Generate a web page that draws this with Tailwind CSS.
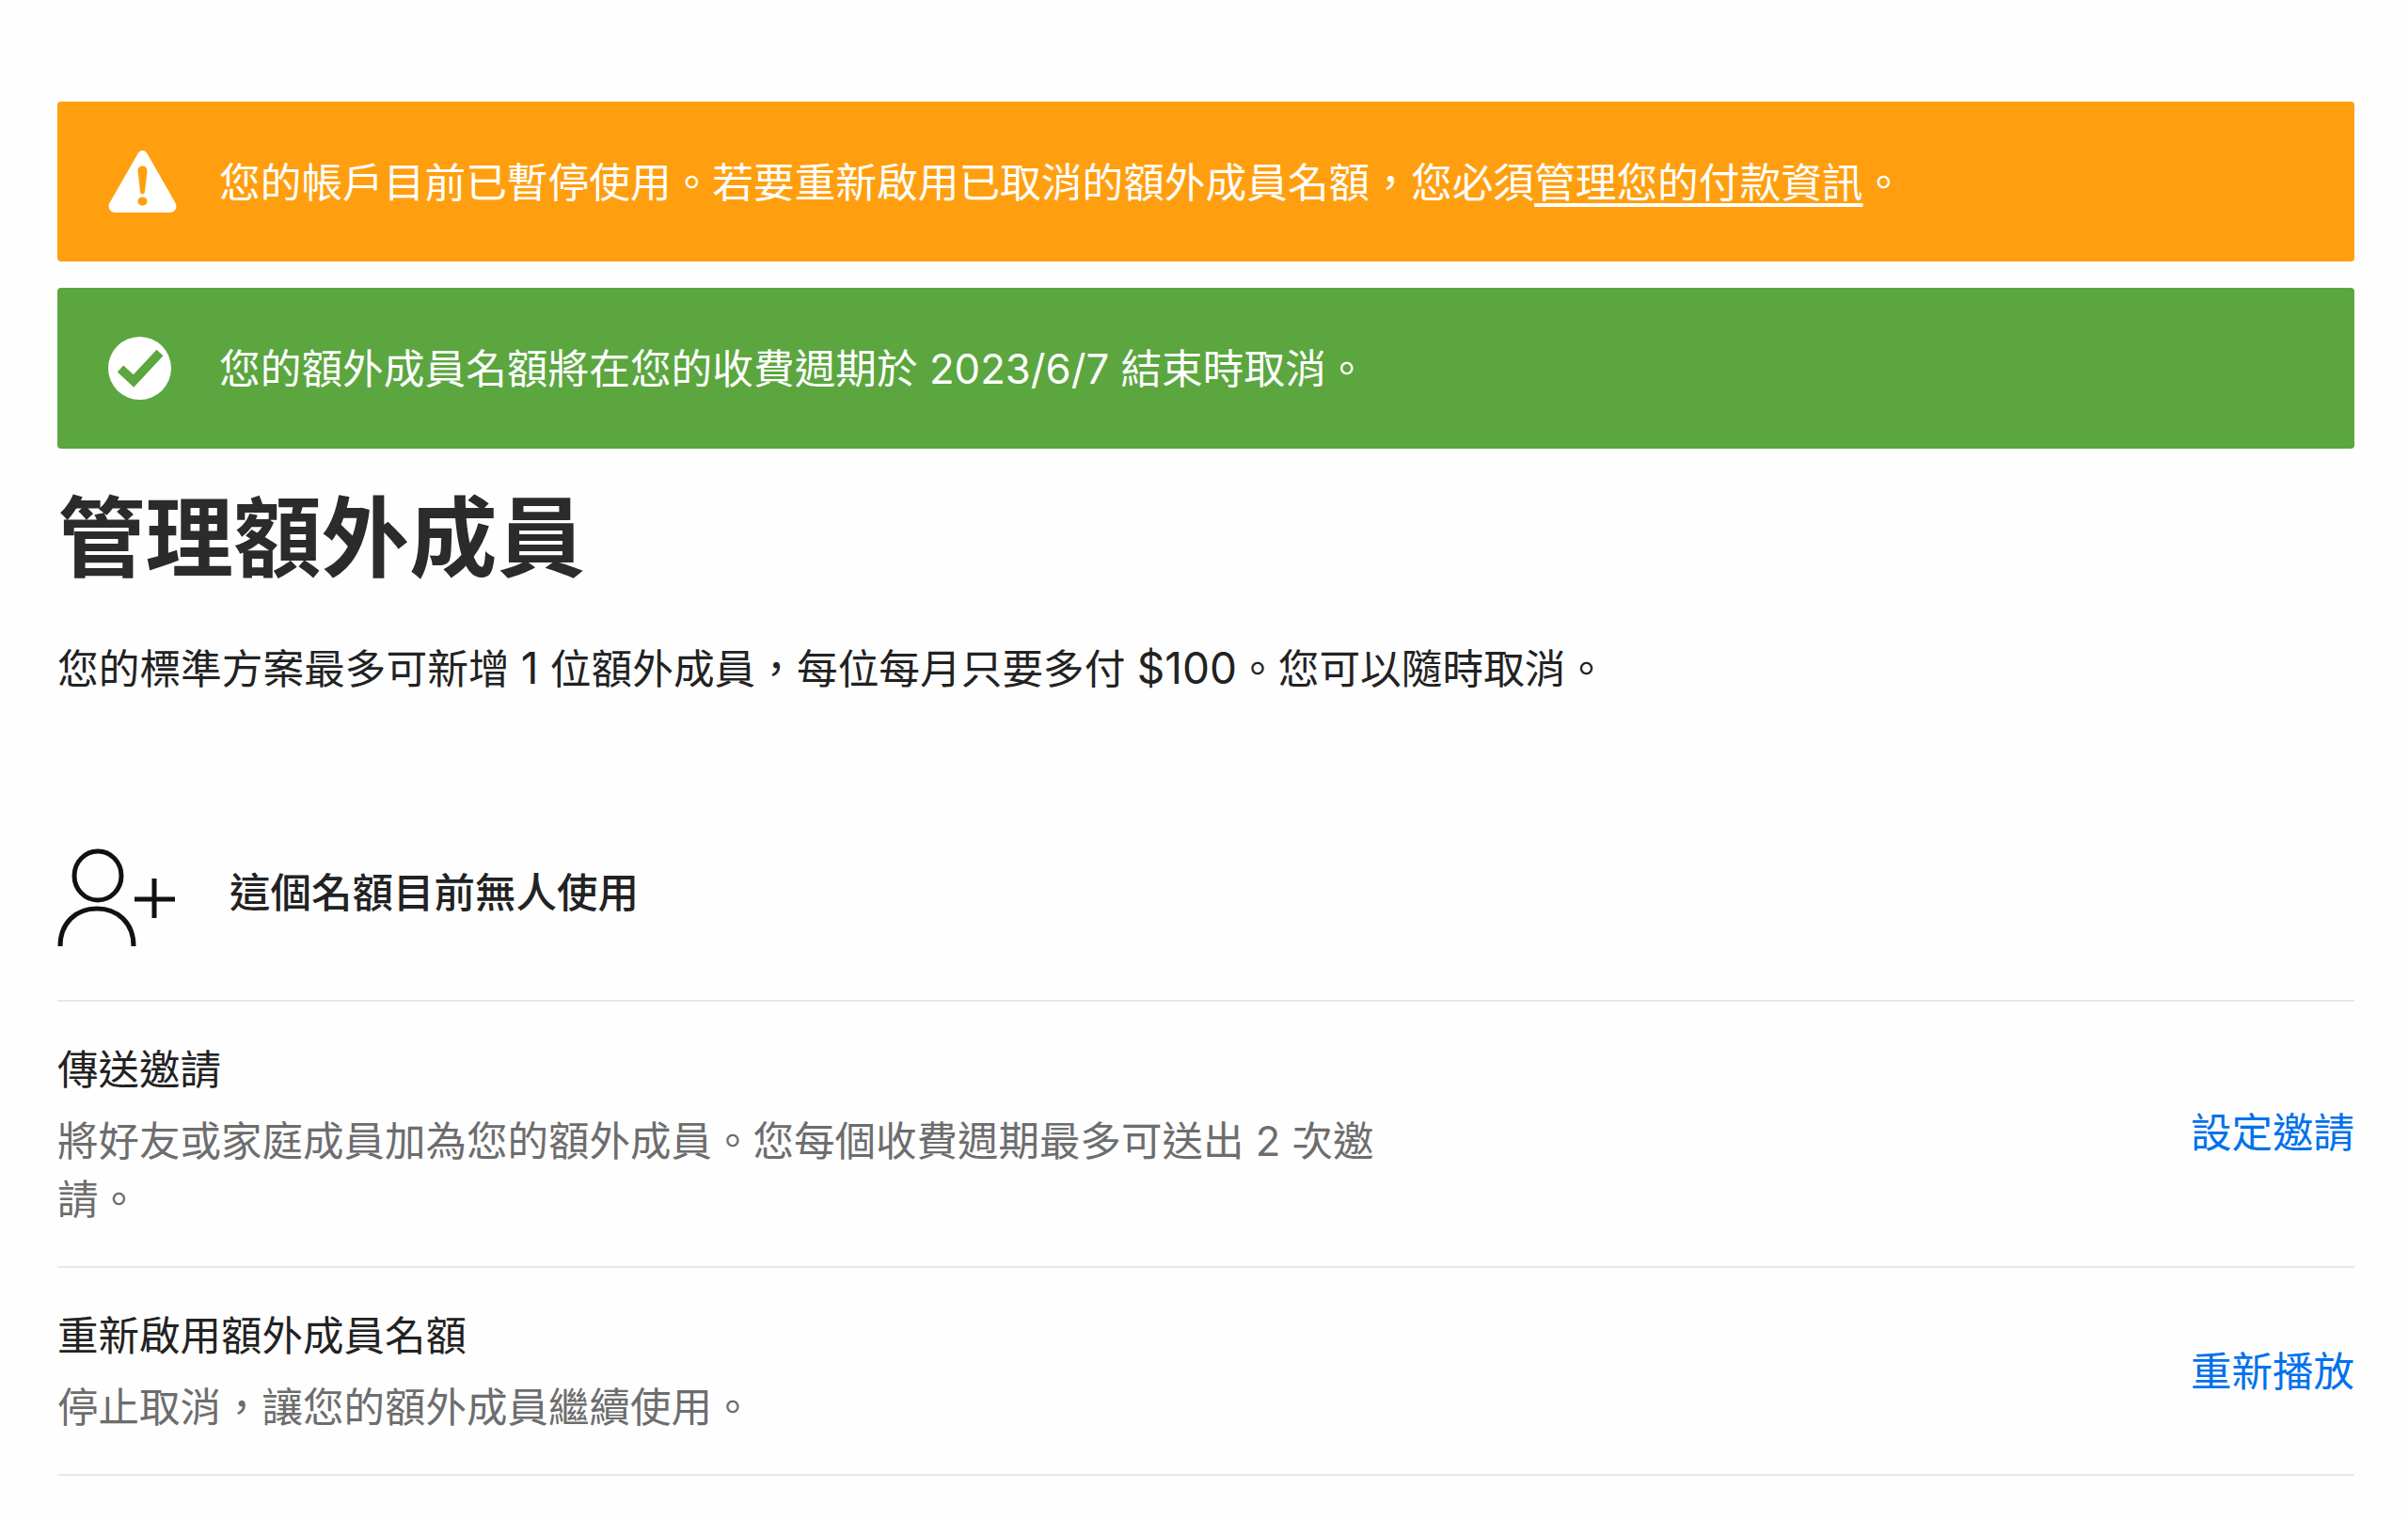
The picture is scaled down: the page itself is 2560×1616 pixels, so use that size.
<!DOCTYPE html>
<html lang="zh-Hant">
<head>
    <meta charset="UTF-8">
    <title>管理額外成員</title>
    <script src="https://cdn.jsdelivr.net/npm/@tailwindcss/browser@4"></script>
</head>
<body class="bg-[#fefefe] font-['Inter','Noto_Sans_CJK_TC',sans-serif] text-[#222222]">
    <main class="pl-[61px] pr-[57px] pt-[108px]">
        <!-- Banners -->
        <div class="flex h-[170px] items-center rounded-[4px] bg-[#ff9f10] pl-[54px] text-white">
            <svg class="mr-[45px] h-[68px] w-[73px] shrink-0" viewBox="0 0 73 72" preserveAspectRatio="none">
                <path fill="#ffffff" fill-rule="evenodd" d="M36.500 1C39 1 41 3 42 5.500L71.500 60C74 65.500 71 71 65 71H8C2 71 -1 65.500 1.500 60L31 5.500C32 3 34 1 36.500 1ZM31.500 24C31.500 20 34 18.500 36.500 18.500C39 18.500 41.500 20 41.500 24L39 47C38.800 49 38 50 36.500 50C35 50 34.200 49 34 47ZM36.500 53.500C39.500 53.500 41.500 55.500 41.500 58C41.500 60.800 39.500 63 36.500 63C33.500 63 31.500 60.800 31.500 58C31.500 55.500 33.500 53.500 36.500 53.500Z"/>
            </svg>
            <p class="pt-[3px] text-[43.700px] leading-[62px]">您的帳戶目前已暫停使用。若要重新啟用已取消的額外成員名額，您必須<a class="underline underline-offset-[6px]">管理您的付款資訊</a>。</p>
        </div>
        <div class="mt-[28px] flex h-[171px] items-center rounded-[4px] bg-[#5ba63f] pl-[54px] text-white">
            <svg class="mr-[51px] h-[67px] w-[67px] shrink-0" viewBox="0 0 67 67">
                <circle cx="33.500" cy="33.500" r="33.500" fill="#ffffff"/>
                <path fill="none" stroke="#5ba63f" stroke-width="9.500" d="M13 34L27 47L55 17"/>
            </svg>
            <p class="pt-[2px] text-[43.700px] leading-[62px]">您的額外成員名額將在您的收費週期於 2023/6/7 結束時取消。</p>
        </div>

        <h1 class="mt-[40px] text-[93.500px] leading-[110px] font-bold text-[#2b2b2b]">管理額外成員</h1>
        <p class="mt-[52px] h-[63px] pt-[2px] text-[43.700px] leading-[62px]">您的標準方案最多可新增 <span class="text-[46px] leading-none">1</span> 位額外成員，每位每月只要多付 <span class="text-[46px] leading-none">$100</span>。您可以隨時取消。</p>

        <!-- Slot -->
        <div class="mt-[159px] flex items-center border-b-2 border-[#e8e8e8] pb-[54px]">
            <svg class="mr-[57px] h-[108px] w-[126px] shrink-0" viewBox="0 0 126 108" fill="none" stroke="#111111" stroke-width="5">
                <ellipse cx="43" cy="30" rx="25" ry="26"/>
                <path d="M3 105C3 80 20 65 42 65C64 65 81 80 81 105"/>
                <path d="M82 55H125M103 33V75"/>
            </svg>
            <p class="pb-[12px] text-[43.500px] leading-[62px] font-medium text-[#222222]">這個名額目前無人使用</p>
        </div>

        <!-- Actions -->
        <div class="flex items-center justify-between border-b-2 border-[#e8e8e8] pt-[41px] pb-[40px]">
            <div class="w-[1410px]">
                <h2 class="text-[43.500px] leading-[62px]">傳送邀請</h2>
                <p class="mt-[14px] text-[43.500px] leading-[62px] text-[#6d6d6e]">將好友或家庭成員加為您的額外成員。您每個收費週期最多可送出 2 次邀請。</p>
            </div>
            <a class="pb-[4px] text-[43.500px] leading-[62px] text-[#0071eb]">設定邀請</a>
        </div>
        <div class="flex items-center justify-between border-b-2 border-[#e8e8e8] pt-[41px] pb-[40px]">
            <div class="w-[1410px]">
                <h2 class="text-[43.500px] leading-[62px]">重新啟用額外成員名額</h2>
                <p class="mt-[14px] text-[43.500px] leading-[62px] text-[#6d6d6e]">停止取消，讓您的額外成員繼續使用。</p>
            </div>
            <a class="text-[43.500px] leading-[62px] text-[#0071eb]">重新播放</a>
        </div>
    </main>
</body>
</html>
